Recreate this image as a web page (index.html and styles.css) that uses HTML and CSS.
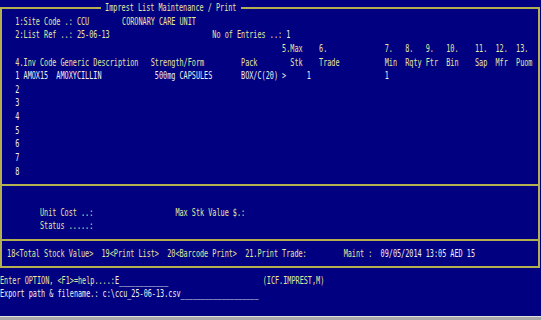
FILE: index.html
```html
<!DOCTYPE html>
<html lang="en">
<head>
  <meta charset="UTF-8" />
  <meta name="viewport" content="width=device-width, initial-scale=1.0"/>
  <title>Imprest List Maintenance / Print</title>
  <link rel="stylesheet" href="styles.css">
</head>
<body>
  <div class="screen">
    <fieldset class="panel">
      <legend class="title"><span class="ln y"> Imprest List Maintenance / Print </span></legend>

      <div class="ln y">   1:Site Code .: CCU        CORONARY CARE UNIT</div>
      <div class="ln y">   2:List Ref ..: 25-06-13                         No of Entries ..: <span class="w">1</span></div>
      <div class="ln y">                                                                    5.Max    6.              7.   8.   9.   10.    11.  12.  13.</div>
      <div class="ln y">   4.Inv Code Generic Description   Strength/Form         Pack        Stk    Trade           Min  Rqty Ftr  Bin    Sap  Mfr  Puom</div>

      <!-- item rows -->
      <div class="ln w">   1 AMOX15  AMOXYCILLIN             500mg CAPSULES       BOX/C(20) &gt;     1                  1</div>
      <div class="ln w">   2</div>
      <div class="ln w">   3</div>
      <div class="ln w">   4</div>
      <div class="ln w">   5</div>
      <div class="ln w">   6</div>
      <div class="ln w">   7</div>
      <div class="ln w">   8</div>

      <div class="rule"></div>
      <div class="ln"></div>
      <div class="ln y">         Unit Cost ..:                    Max Stk Value $.:</div>
      <div class="ln y">         Status .....:</div>
      <div class="rule"></div>

      <div class="ln y"> 18&lt;Total Stock Value&gt;  19&lt;Print List&gt;  20&lt;Barcode Print&gt;  21.Print Trade:         Maint :  <span class="w">09/05/2014 13:05 AED 15</span></div>
    </fieldset>

    <div class="ln"><span class="y">Enter OPTION, &lt;F1&gt;=help....:</span><span class="w">E____________</span>                       <span class="y">(ICF.IMPREST,M)</span></div>
    <div class="ln w">Export path &amp; filename.: c:\ccu_25-06-13.csv___________________</div>

    <div class="status-bar"></div>
  </div>
</body>
</html>
```

FILE: styles.css
```css
body {
  margin: 0;
  background: #000080;
  font-family: "DejaVu Sans Mono", monospace;
  font-size: 10px;
  color: #f0f0f0;
}

.screen {
  height: 320px;
  display: flex;
  flex-direction: column;
  padding-top: 1px;
  box-sizing: border-box;
  overflow: hidden;
}

/* main bordered box */
.panel {
  width: 539.7px;
  min-width: 0;
  box-sizing: border-box;
  margin: 0 0 5.8px 0;
  padding: 0 0 5.8px 1px;
  border: 2px solid #b4b050;
}

.title {
  width: 139.5px;
  height: 13.65px;
  margin-left: 98px;
  padding: 0;
}

/* one terminal row: 132 cols squeezed into 541px */
.ln {
  display: block;
  height: 13.65px;
  line-height: 13.65px;
  white-space: pre;
  transform: scaleX(0.6817);
  transform-origin: 0 0;
}

.y { color: #e6e6a0; }
.w { color: #f0f0f0; }

.rule {
  height: 13.65px;
  display: flex;
  align-items: center;
  margin-left: -1px;
}

.rule::after {
  content: "";
  flex: 1;
  border-top: 2px solid #b4b050;
}

.status-bar {
  margin-top: auto;
  height: 3px;
  border-top: 1px solid #e0e0e0;
  background: #a8a8a8;
}
```
